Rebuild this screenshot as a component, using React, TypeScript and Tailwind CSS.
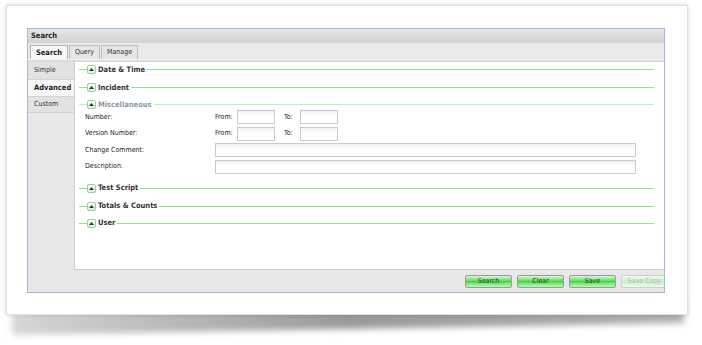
import React from 'react';

const font = { fontFamily: "Tahoma, 'DejaVu Sans Condensed', 'Liberation Sans', sans-serif" };

function Toggle() {
  return (
    <span className="w-[9px] h-[9px] border border-[#8fd88f] rounded-[2px] bg-gradient-to-b from-white to-[#e8e8e8] flex items-center justify-center shrink-0">
      <svg width="5" height="3" viewBox="0 0 5 3">
        <path d="M0 3 L2.5 0 L5 3 Z" fill="#333" />
      </svg>
    </span>
  );
}

function Section({ title, muted, className = '' }: { title: string; muted?: boolean; className?: string }) {
  const line = muted ? 'bg-[#bdeebd]' : 'bg-[#8ee48e]';
  return (
    <div className={`flex items-center h-[9px] pl-[4px] pr-[10px] ${className}`}>
      <span className={`w-[8px] h-[1px] ${line}`} />
      <Toggle />
      <span className={`px-[2px] text-[7.5px] font-bold leading-none ${muted ? 'text-[#8c9aa6]' : 'text-[#333]'}`}>
        {title}
      </span>
      <span className={`flex-1 h-[1px] ${line}`} />
    </div>
  );
}

function Input({ w }: { w: string }) {
  return <div className={`${w} h-[14px] border border-[#c9c9d2] bg-gradient-to-b from-[#f0f0f0] to-white to-40%`} />;
}

function RangeRow({ label }: { label: string }) {
  return (
    <div className="flex items-center h-[14px]">
      <span className="w-[130px] text-[7px] text-[#222]">{label}</span>
      <span className="w-[22px] text-[7px] text-[#222]">From:</span>
      <Input w="w-[38px]" />
      <span className="ml-[9px] w-[16px] text-[7px] text-[#222]">To:</span>
      <Input w="w-[38px]" />
    </div>
  );
}

function TextRow({ label }: { label: string }) {
  return (
    <div className="flex items-center h-[14px]">
      <span className="w-[130px] text-[7px] text-[#222]">{label}</span>
      <Input w="w-[421px]" />
    </div>
  );
}

function Btn({ label, disabled }: { label: string; disabled?: boolean }) {
  return (
    <div
      className={`w-[47px] h-[13px] shrink-0 rounded-[2px] border flex items-center justify-center text-[7px] leading-none ${
        disabled
          ? 'border-[#cfcfcf] bg-gradient-to-b from-[#eefaee] via-[#c8efc8] to-[#eefaee] text-[#b8b8b8]'
          : 'border-[#9a9a9a] bg-gradient-to-b from-[#d8f8d8] via-[#3ed83e] to-[#c4f4c4] text-[#2a4a2a]'
      }`}
    >
      {label}
    </div>
  );
}

export default function App() {
  return (
    <div className="w-[702px] h-[345px] bg-white pt-[5px] pl-[6px]" style={font}>
      <div className="relative w-[682px] h-[310px]">
        <div className="absolute left-[6px] right-[4px] bottom-[-14px] h-[22px] bg-gradient-to-r from-[#d6d6d6] via-[#9a9a9a] to-[#b0b0b0] blur-[3px] skew-y-[-1deg]" />
        <div className="relative w-full h-full bg-white border border-[#e2e2e2] shadow-[0_0_4px_rgba(0,0,0,0.18)] pl-[20px] pt-[22px]">
          <div className="w-[638px] h-[265px] border border-[#9fb9da] flex flex-col bg-[#e8e8e8]">
            <div className="h-[14px] bg-gradient-to-b from-[#e6e6e6] to-[#d2d2d2] flex items-center pl-[3px]">
              <span className="text-[7.5px] font-bold text-[#222] leading-none">Search</span>
            </div>
            <div className="h-[16px] bg-[#e9e9e9] flex items-end pl-[2px] gap-[1px]">
              <div className="h-[14px] w-[38px] border border-b-0 border-[#b4b4b4] bg-[#f7f7f7] flex items-center justify-center text-[7.5px] font-bold text-[#222]">
                Search
              </div>
              <div className="h-[14px] w-[31px] border border-b-0 border-[#c0c0c0] bg-[#e6e6e6] flex items-center justify-center text-[7px] text-[#333]">
                Query
              </div>
              <div className="h-[14px] w-[37px] border border-b-0 border-[#c0c0c0] bg-[#e6e6e6] flex items-center justify-center text-[7px] text-[#333]">
                Manage
              </div>
            </div>
            <div className="h-[3px] bg-[#dcdcdc] border-t border-[#f4f4f4]" />
            <div className="flex h-[208px]">
              <div className="w-[46px] shrink-0 bg-[#e8e8e8]">
                <div className="h-[18px] pl-[6px] flex items-center border-b border-[#d2d2d2] bg-[#e2e2e2] text-[7px] text-[#333]">
                  Simple
                </div>
                <div className="h-[17px] pl-[6px] flex items-center border-b border-[#d2d2d2] bg-[#f6f6f6] text-[7.5px] font-bold text-[#222]">
                  Advanced
                </div>
                <div className="h-[16px] pl-[6px] flex items-center border-b border-[#d2d2d2] bg-[#e2e2e2] text-[7px] text-[#333]">
                  Custom
                </div>
              </div>
              <div className="flex-1 bg-white border-l border-b border-[#cfcfcf] pt-[3px]">
                <Section title="Date & Time" />
                <Section title="Incident" className="mt-[9px]" />
                <Section title="Miscellaneous" muted className="mt-[8px]" />
                <div className="pl-[10px] flex flex-col gap-[2.5px] mt-[1px]">
                  <RangeRow label="Number:" />
                  <RangeRow label="Version Number:" />
                  <TextRow label="Change Comment:" />
                  <TextRow label="Description:" />
                </div>
                <Section title="Test Script" className="mt-[10px]" />
                <Section title="Totals & Counts" className="mt-[9px]" />
                <Section title="User" className="mt-[8px]" />
              </div>
            </div>
            <div className="flex-1 flex items-center justify-end gap-[5px] overflow-hidden">
              <Btn label="Search" />
              <Btn label="Clear" />
              <Btn label="Save" />
              <div className="mr-[-4px]">
                <Btn label="Save Copy" disabled />
              </div>
            </div>
          </div>
        </div>
      </div>
    </div>
  );
}
